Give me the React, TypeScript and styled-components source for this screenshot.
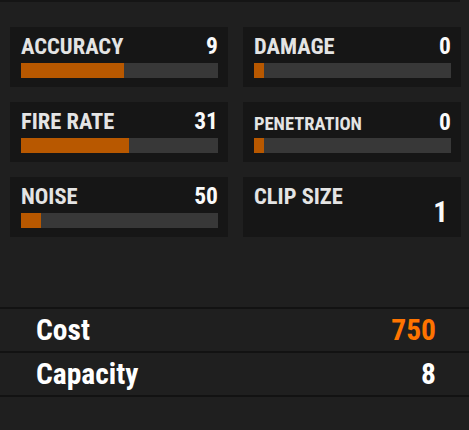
import React from 'react';
import styled, {createGlobalStyle} from "styled-components";

const GlobalStyle = createGlobalStyle`
  body {
    margin: 0;
    background-color: #1f1f1f;
    font-family: Roboto, "Liberation Sans", sans-serif;
  }
`

const Page = styled.div`
  width: 469px;
  height: 430px;
  background-color: #1f1f1f;
  overflow: hidden;
`

const TopEdge = styled.div`
  height: 2px;
  margin-right: 9px;
  background-color: #151515;
`

const StatsGrid = styled.div`
  display: grid;
  grid-template-columns: 218px 218px;
  gap: 15px;
  padding: 25px 0 0 10px;
`

const Card = styled.div`
  height: 60px;
  box-sizing: border-box;
  padding: 8px 10px 0 11px;
  background-color: #161616;
  display: flex;
  flex-direction: column;
`

const CardHead = styled.div<{ $centered?: boolean }>`
  display: flex;
  justify-content: space-between;
  align-items: ${p => p.$centered ? 'flex-start' : 'baseline'};
  height: ${p => p.$centered ? '44px' : '28px'};
`

const Label = styled.span<{ $small?: boolean }>`
  font-size: ${p => p.$small ? '18.5px' : '22.5px'};
  line-height: 22px;
  font-weight: 700;
  font-stretch: 83%;
  color: #e4e4e4;
  text-transform: uppercase;
  margin-top: ${p => p.$small ? '3px' : '0'};
`

const Value = styled.span<{ $big?: boolean }>`
  font-size: ${p => p.$big ? '29px' : '23.5px'};
  line-height: 22px;
  font-weight: 700;
  font-stretch: 83%;
  color: #fafafa;
  margin-top: ${p => p.$big ? '16px' : '0'};
  margin-right: ${p => p.$big ? '3px' : '0'};
`

const Track = styled.div`
  height: 15px;
  background-color: #383838;
`

const Fill = styled.div`
  height: 100%;
  background-color: #b85800;
`

const Summary = styled.div`
  margin-top: 70px;
  border-top: 2px solid #121212;
`

const SummaryRow = styled.div`
  display: flex;
  justify-content: space-between;
  align-items: center;
  height: 42px;
  padding: 0 33px 0 36px;
  border-bottom: 2px solid #121212;
`

const RowText = styled.span<{ $accent?: boolean }>`
  font-size: 29.5px;
  line-height: 42px;
  font-weight: 700;
  font-stretch: 83%;
  color: ${p => p.$accent ? '#ff7400' : '#ffffff'};
`

type Stat = {
    name: string
    value: number
    fill?: number
    small?: boolean
}

const stats: Stat[] = [
    {name: 'Accuracy', value: 9, fill: 52.5},
    {name: 'Damage', value: 0, fill: 5},
    {name: 'Fire Rate', value: 31, fill: 55},
    {name: 'Penetration', value: 0, fill: 5, small: true},
    {name: 'Noise', value: 50, fill: 10},
    {name: 'Clip Size', value: 1},
]

const StatCard = ({stat}: { stat: Stat }) => {
    const hasBar = stat.fill !== undefined
    return (
        <Card>
            <CardHead $centered={!hasBar}>
                <Label $small={stat.small}>{stat.name}</Label>
                <Value $big={!hasBar}>{stat.value}</Value>
            </CardHead>
            {hasBar && (
                <Track>
                    <Fill style={{width: `${stat.fill}%`}}/>
                </Track>
            )}
        </Card>
    )
}

const App = () => {
    return (
        <Page>
            <GlobalStyle/>
            <TopEdge/>
            <StatsGrid>
                {stats.map(s => <StatCard key={s.name} stat={s}/>)}
            </StatsGrid>
            <Summary>
                <SummaryRow>
                    <RowText>Cost</RowText>
                    <RowText $accent>750</RowText>
                </SummaryRow>
                <SummaryRow>
                    <RowText>Capacity</RowText>
                    <RowText>8</RowText>
                </SummaryRow>
            </Summary>
        </Page>
    );
}

export default App;
